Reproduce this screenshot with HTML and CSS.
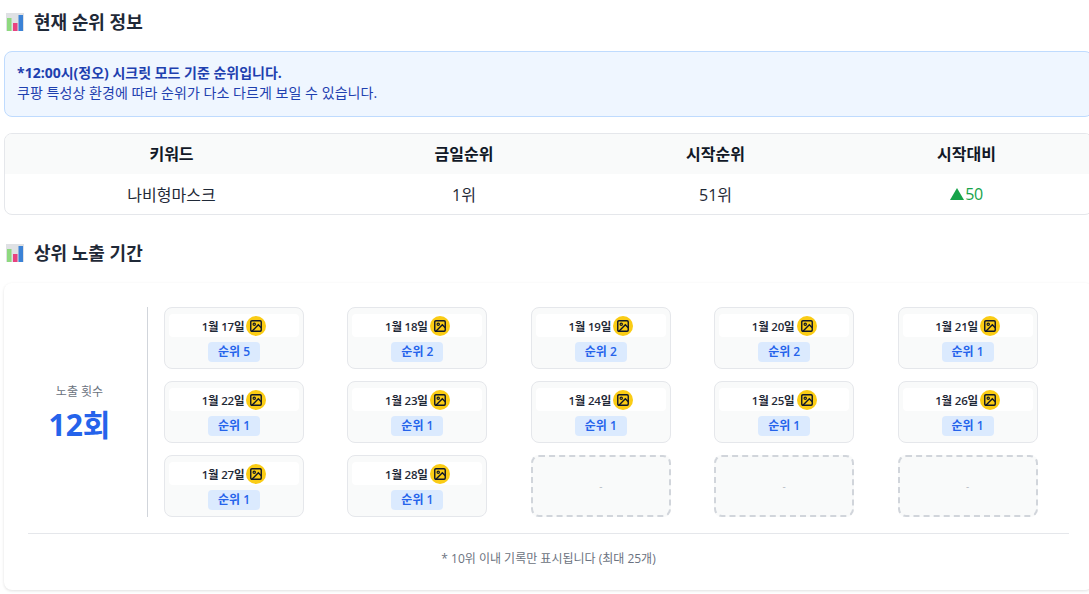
FILE: index.html
```html
<!DOCTYPE html>
<html lang="ko">
<head>
<meta charset="utf-8">
<title>순위 정보</title>
<link rel="stylesheet" href="styles.css">
</head>
<body>
<svg class="defs" width="0" height="0">
  <symbol id="chart" viewBox="0 0 18 18">
    <rect x="0" y="0" width="18" height="18" fill="#dfe1e4"/>
    <rect x="1" y="5" width="4.5" height="13" fill="#8ed97f"/>
    <rect x="7" y="10" width="4.5" height="8" fill="#e8417f"/>
    <rect x="12.5" y="2" width="4.5" height="16" fill="#3b82d6"/>
  </symbol>
  <symbol id="pic" viewBox="0 0 24 24">
    <rect x="3" y="3" width="18" height="18" rx="2" fill="none" stroke="currentColor" stroke-width="2.4"/>
    <circle cx="9" cy="9" r="2" fill="none" stroke="currentColor" stroke-width="2"/>
    <path d="M21 15l-5-5L5 21" fill="none" stroke="currentColor" stroke-width="2.4"/>
  </symbol>
</svg>
<main class="page">
  <h2 class="title"><svg class="emoji"><use href="#chart"/></svg>현재 순위 정보</h2>
  <div class="notice">
    <strong>*12:00시(정오) 시크릿 모드 기준 순위입니다.</strong>
    <p>쿠팡 특성상 환경에 따라 순위가 다소 다르게 보일 수 있습니다.</p>
  </div>
  <div class="table">
    <div class="row head"><div>키워드</div><div>금일순위</div><div>시작순위</div><div>시작대비</div></div>
    <div class="row"><div>나비형마스크</div><div>1위</div><div>51위</div><div class="up"><span class="tri"></span>50</div></div>
  </div>
  <h2 class="title second"><svg class="emoji"><use href="#chart"/></svg>상위 노출 기간</h2>
  <section class="card">
    <div class="body">
      <div class="stat"><span class="stat-label">노출 횟수</span><b class="stat-value">12회</b></div>
      <div class="grid">
        <div class="item"><div class="date">1월 17일<span class="ico"><svg><use href="#pic"/></svg></span></div><span class="rank">순위 5</span></div>
        <div class="item"><div class="date">1월 18일<span class="ico"><svg><use href="#pic"/></svg></span></div><span class="rank">순위 2</span></div>
        <div class="item"><div class="date">1월 19일<span class="ico"><svg><use href="#pic"/></svg></span></div><span class="rank">순위 2</span></div>
        <div class="item"><div class="date">1월 20일<span class="ico"><svg><use href="#pic"/></svg></span></div><span class="rank">순위 2</span></div>
        <div class="item"><div class="date">1월 21일<span class="ico"><svg><use href="#pic"/></svg></span></div><span class="rank">순위 1</span></div>
        <div class="item"><div class="date">1월 22일<span class="ico"><svg><use href="#pic"/></svg></span></div><span class="rank">순위 1</span></div>
        <div class="item"><div class="date">1월 23일<span class="ico"><svg><use href="#pic"/></svg></span></div><span class="rank">순위 1</span></div>
        <div class="item"><div class="date">1월 24일<span class="ico"><svg><use href="#pic"/></svg></span></div><span class="rank">순위 1</span></div>
        <div class="item"><div class="date">1월 25일<span class="ico"><svg><use href="#pic"/></svg></span></div><span class="rank">순위 1</span></div>
        <div class="item"><div class="date">1월 26일<span class="ico"><svg><use href="#pic"/></svg></span></div><span class="rank">순위 1</span></div>
        <div class="item"><div class="date">1월 27일<span class="ico"><svg><use href="#pic"/></svg></span></div><span class="rank">순위 1</span></div>
        <div class="item"><div class="date">1월 28일<span class="ico"><svg><use href="#pic"/></svg></span></div><span class="rank">순위 1</span></div>
        <div class="item empty">-</div>
        <div class="item empty">-</div>
        <div class="item empty">-</div>
      </div>
    </div>
    <p class="note">* 10위 이내 기록만 표시됩니다 (최대 25개)</p>
  </section>
</main>
</body>
</html>
```
FILE: styles.css
```css
* { box-sizing: border-box; }
html, body { margin: 0; height: 594px; overflow: hidden; background: #fff; }
body { font-family: "Open Sans", "Noto Sans CJK KR", sans-serif; color: #111827; }
.defs { position: absolute; }
.page { width: 1089px; margin-left: 4px; }
.title { display: flex; margin: 0; padding: 10px 0 0 2px; height: 51px; align-items: flex-start; font-size: 18px; line-height: 25px; font-weight: 700; color: #1f2937; }
.title.second { height: 68px; padding-top: 26px; }
.emoji { width: 18px; height: 18px; margin: 3px 10px 0 0; }
.notice { height: 66px; padding: 11px 12px; background: #eff6ff; border: 1px solid #bfdbfe; border-radius: 8px; font-size: 14px; line-height: 20px; color: #1e40af; margin-bottom: 16px; }
.notice strong { display: block; font-weight: 700; }
.notice p { margin: 0; letter-spacing: .05px; }
.table { border: 1px solid #e5e7eb; border-radius: 8px; overflow: hidden; height: 82px; }
.row { display: grid; grid-template-columns: 333px 252px 251px 251px; height: 40px; padding-bottom: 1px; align-items: center; text-align: center; font-size: 16px; color: #1f2937; }
.row.head { padding-bottom: 2px; background: #f9fafa; font-weight: 700; color: #111827; }
.up { color: #16a34a; letter-spacing: -.5px; }
.tri { display: inline-block; width: 0; height: 0; margin-right: 1px; border-left: 7px solid transparent; border-right: 7px solid transparent; border-bottom: 12px solid #16a34a; }
.card { height: 307px; padding: 24px; border-radius: 8px; background: #fff; box-shadow: 0 1px 3px rgba(0,0,0,.12); }
.body { display: flex; height: 210px; }
.stat { width: 120px; flex: none; padding: 5px 16px 0 0; border-right: 1px solid #d1d5db; display: flex; flex-direction: column; align-items: center; justify-content: center; margin-right: 16px; }
.stat-label { font-size: 12px; line-height: 18px; color: #6b7280; }
.stat-value { margin-top: 2px; font-size: 30px; line-height: 44px; font-weight: 700; color: #2563eb; }
.grid { display: grid; grid-template-columns: repeat(5, 140px); column-gap: 43.4px; row-gap: 12px; grid-auto-rows: 62px; }
.item { display: flex; flex-direction: column; align-items: center; padding: 6px 4px 0; background: #f9fafa; border: 1px solid #e5e7eb; border-radius: 8px; }
.date { display: flex; align-items: center; justify-content: center; width: 100%; height: 23px; background: #fff; border-radius: 4px; font-size: 11.5px; letter-spacing: -.2px; font-weight: 600; color: #1f2937; }
.ico { display: flex; align-items: center; justify-content: center; width: 20px; height: 20px; margin-left: 2px; border-radius: 50%; background: #facc15; color: #111827; }
.ico svg { width: 14px; height: 14px; }
.rank { margin-top: 5px; padding: 0 10px; height: 20px; border-radius: 4px; background: #dbeafe; color: #2563eb; font-size: 12px; line-height: 20px; font-weight: 600; }
.empty { justify-content: center; padding: 0; border: 2px dashed #d1d5db; color: #b6bbc3; font-size: 10px; }
.note { margin: 16px 0 0; padding-top: 16px; height: 50px; border-top: 1px solid #e5e7eb; text-align: center; font-size: 12px; line-height: 18px; color: #6b7280; }
```
